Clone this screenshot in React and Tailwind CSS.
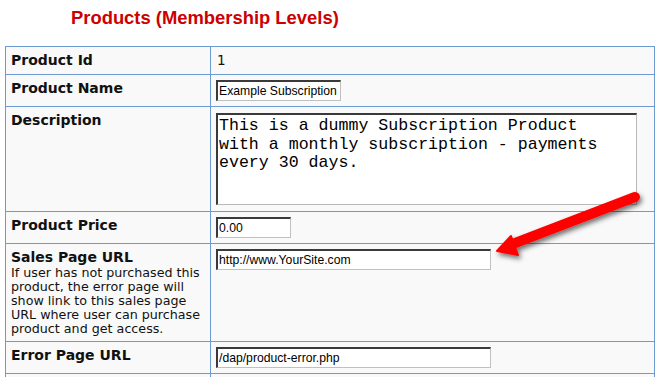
import React from 'react';

const label = "text-[14px] leading-[17px] font-bold text-[#111]";
const cell = "bg-[#f9f9f9] p-[5px]";
const inputCls =
  "block h-[21px] bg-white border-t-2 border-l-2 border-b border-r border-t-[#3a3a3a] border-l-[#3a3a3a] border-b-[#c0c0c0] border-r-[#c0c0c0] px-[1px] text-[12.2px] text-black outline-none";

const Arrow = () => (
  <svg className="absolute top-0 left-0 pointer-events-none" width="660" height="377" viewBox="0 0 660 377">
    <defs>
      <filter id="shadow" x="-20%" y="-40%" width="140%" height="180%">
        <feDropShadow dx="2" dy="3" stdDeviation="2.5" floodColor="#000" floodOpacity="0.55" />
      </filter>
    </defs>
    <g filter="url(#shadow)" fill="#ff0000" stroke="#ff0000">
      <line x1="635" y1="197" x2="510" y2="245" strokeWidth="10" strokeLinecap="round" />
      <polygon points="497,251 511,236 518,255" strokeWidth="2" strokeLinejoin="round" />
    </g>
  </svg>
);

export default function App() {
  return (
    <div className="relative w-[660px] h-[377px] overflow-hidden bg-white" style={{ fontFamily: '"DejaVu Sans", Verdana, sans-serif' }}>
      {/* Title */}
      <div className="h-[46px] pt-[8px] pl-[71px]">
        <h1 className="text-[18.4px] leading-[20px] font-bold text-[#cc0000]" style={{ fontFamily: '"Liberation Sans", Arial, sans-serif' }}>
          Products (Membership Levels)
        </h1>
      </div>

      {/* Form table */}
      <div className="ml-[5px] w-[650px] grid grid-cols-[204px_443px] gap-px bg-[#6d9bd1] border border-[#6d9bd1]">
        <div className={cell}><div className={label}>Product Id</div></div>
        <div className={cell}><div className="text-[13.5px] leading-[17px] text-[#111] pl-[1px]">1</div></div>

        <div className={cell}><div className={label}>Product Name</div></div>
        <div className={cell}>
          <input className={`${inputCls} w-[125px]`} style={{ fontFamily: '"Liberation Sans", Arial, sans-serif' }} defaultValue="Example Subscription" />
        </div>

        <div className={cell}><div className={label}>Description</div></div>
        <div className={cell}>
          <textarea
            className="block my-[1px] w-[421px] h-[92px] resize-none overflow-hidden bg-white border-t-2 border-l-2 border-b border-r border-t-[#3a3a3a] border-l-[#3a3a3a] border-b-[#b8b8b8] border-r-[#b8b8b8] pl-[1px] pt-[2px] text-[16.6px] leading-[18.5px] text-black outline-none"
            style={{ fontFamily: '"Liberation Mono", "Courier New", monospace' }}
            defaultValue={"This is a dummy Subscription Product\nwith a monthly subscription - payments\nevery 30 days."}
          />
        </div>

        <div className={cell}><div className={label}>Product Price</div></div>
        <div className={cell}>
          <input className={`${inputCls} w-[75px]`} style={{ fontFamily: '"Liberation Sans", Arial, sans-serif' }} defaultValue="0.00" />
        </div>

        <div className={cell}>
          <div className={label}>Sales Page URL</div>
          <p className="text-[12.7px] leading-[14px] text-[#111]">
            If user has not purchased this<br />
            product, the error page will<br />
            show link to this sales page<br />
            URL where user can purchase<br />
            product and get access.
          </p>
        </div>
        <div className={cell}>
          <input className={`${inputCls} w-[275px]`} style={{ fontFamily: '"Liberation Sans", Arial, sans-serif' }} defaultValue="http://www.YourSite.com" />
        </div>

        <div className={cell}><div className={label}>Error Page URL</div></div>
        <div className={cell}>
          <input className={`${inputCls} w-[275px]`} style={{ fontFamily: '"Liberation Sans", Arial, sans-serif' }} defaultValue="/dap/product-error.php" />
        </div>

        {/* next row, only its top edge is in view */}
        <div className={`${cell} h-[31px]`} />
        <div className={`${cell} h-[31px]`} />
      </div>

      <Arrow />
    </div>
  );
}
